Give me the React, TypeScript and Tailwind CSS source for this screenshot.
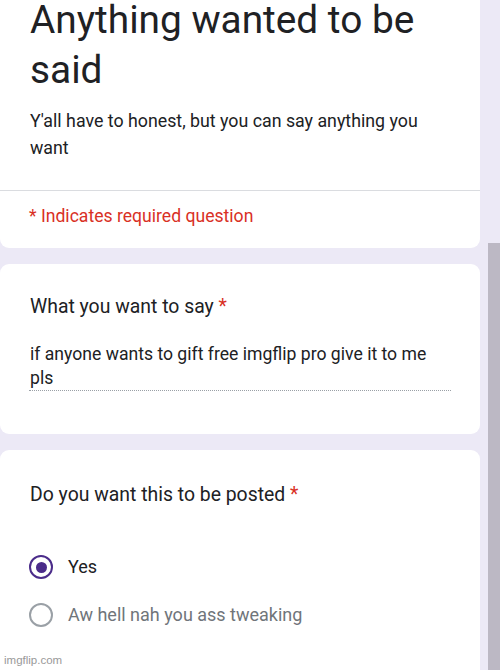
import React from "react";

function Radio({ checked, label }: { checked: boolean; label: string }) {
  return (
    <div className="flex items-center h-[48px]">
      <div
        className={
          checked
            ? "w-[24px] h-[24px] rounded-full border-[2.5px] border-[#4b2c8a] flex items-center justify-center"
            : "w-[24px] h-[24px] rounded-full border-[2px] border-[#9aa0a6]"
        }
      >
        {checked && <div className="w-[11px] h-[11px] rounded-full bg-[#4b2c8a]" />}
      </div>
      <span
        className={
          checked
            ? "ml-[15px] text-[18px] leading-[24px] text-[#202124]"
            : "ml-[15px] text-[18px] leading-[24px] text-[#70757a]"
        }
      >
        {label}
      </span>
    </div>
  );
}

export default function App() {
  return (
    <div
      className="relative w-[500px] h-[670px] overflow-hidden bg-[#ece9f6] flex"
      style={{ fontFamily: "Roboto, 'Noto Sans', sans-serif" }}
    >
      <div className="w-[480px] flex flex-col gap-[16px]">
        {/* Header card */}
        <div className="bg-white rounded-b-[9px] shrink-0">
          <div className="pl-[30px] pr-[40px] pb-[29px]">
            <h1 className="mt-[-5px] text-[38.8px] leading-[50px] text-[#202124] font-normal">
              Anything wanted to be said
            </h1>
            <p className="mt-[12px] text-[17.8px] leading-[27px] text-[#202124]">
              Y'all have to honest, but you can say anything you want
            </p>
          </div>
          <div className="h-px bg-[#dadce0]" />
          <div className="pl-[29px] pt-[12px] pb-[18px] text-[17.6px] leading-[27px] text-[#d93025]">
            * Indicates required question
          </div>
        </div>

        {/* Question 1 */}
        <div className="bg-white rounded-[9px] shrink-0 h-[170px] pt-[28px] pl-[30px]">
          <div className="text-[19.4px] leading-[30px] text-[#202124]">
            What you want to say <span className="text-[#d93025]">*</span>
          </div>
          <div className="mt-[20px] w-[422px] ml-[-1px] pl-[1px] border-b border-dotted border-[#9aa0a6] text-[17.6px] leading-[24px] text-[#202124]">
            if anyone wants to gift free imgflip pro give it to me pls
          </div>
        </div>

        {/* Question 2 */}
        <div className="bg-white rounded-t-[9px] flex-1 pt-[30px] pl-[29px]">
          <div className="pl-[1px] text-[19.4px] leading-[30px] text-[#202124]">
            Do you want this to be posted <span className="text-[#d93025]">*</span>
          </div>
          <div className="mt-[33px] flex flex-col">
            <Radio checked label="Yes" />
            <Radio checked={false} label="Aw hell nah you ass tweaking" />
          </div>
        </div>
      </div>

      {/* Scrollbar area */}
      <div className="w-[8px]" />
      <div className="w-[12px] flex flex-col pt-[243px]">
        <div className="flex-1 bg-[#bcb8c4]" />
      </div>

      {/* Watermark */}
      <div
        className="absolute left-[4px] bottom-[3px] text-[11.5px] leading-[14px] text-[#999999]"
        style={{ fontFamily: "'Liberation Sans', Arial, sans-serif" }}
      >
        imgflip.com
      </div>
    </div>
  );
}
